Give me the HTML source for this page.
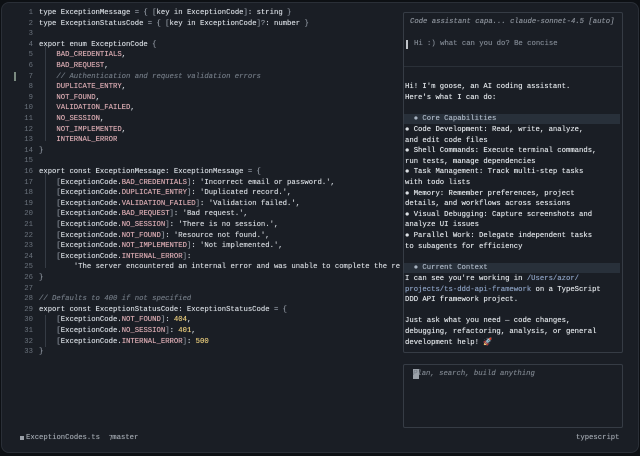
<!DOCTYPE html>
<html><head><meta charset="utf-8"><style>
*{margin:0;padding:0;box-sizing:border-box}
body{width:640px;height:456px;background:#0d1014;overflow:hidden;font-family:"Liberation Mono",monospace;font-size:7.25px;color:#d0d5db}
.win{position:absolute;left:1px;top:2px;width:638px;height:451px;background:#1a1e25;border-radius:8px;border:1px solid #2a2f37}
.l{position:absolute;white-space:pre;line-height:10.6px;height:10.6px;text-shadow:0 0 0.4px currentColor}
.n{position:absolute;width:33px;text-align:right;color:#6b737d;white-space:pre;line-height:10.6px}
.k{color:#d0d5db}.m{color:#d3a6ad}.c{color:#6f7781;font-style:italic}.s{color:#cfd3d8}.num{color:#e3c77a}.p{color:#8c939d}
.g{position:absolute;left:45px;width:1px;background:#353b44}
.box{position:absolute;border:1px solid #363c45;border-radius:2px}
.r{position:absolute;left:405px;white-space:pre;line-height:10.6px;color:#dde1e5;text-shadow:0 0 0.4px currentColor}
.hl{position:absolute;left:404px;width:216px;height:10px;background:#28303a}
.u{color:#8a9fc0}
</style></head><body>
<div class="win"></div>
<div class="g" style="top:46px;height:95px"></div>
<div class="g" style="top:173px;height:95px"></div>
<div class="g" style="top:315px;height:32px"></div>
<div style="position:absolute;left:14px;top:72px;width:2px;height:9px;background:#7a8a80"></div>
<div id="code"></div>
<script>
var L=[
'<span class="k">type ExceptionMessage</span> <span class="p">= { [</span>key in ExceptionCode<span class="p">]</span>: string <span class="p">}</span>',
'<span class="k">type ExceptionStatusCode</span> <span class="p">= { [</span>key in ExceptionCode<span class="p">]?</span>: number <span class="p">}</span>',
'',
'export enum ExceptionCode <span class="p">{</span>',
'    <span class="m">BAD_CREDENTIALS</span>,',
'    <span class="m">BAD_REQUEST</span>,',
'    <span class="c">// Authentication and request validation errors</span>',
'    <span class="m">DUPLICATE_ENTRY</span>,',
'    <span class="m">NOT_FOUND</span>,',
'    <span class="m">VALIDATION_FAILED</span>,',
'    <span class="m">NO_SESSION</span>,',
'    <span class="m">NOT_IMPLEMENTED</span>,',
'    <span class="m">INTERNAL_ERROR</span>',
'<span class="p">}</span>',
'',
'export const ExceptionMessage: ExceptionMessage <span class="p">= {</span>',
'    <span class="p">[</span>ExceptionCode.<span class="m">BAD_CREDENTIALS</span><span class="p">]</span>: <span class="s">\'Incorrect email or password.\'</span>,',
'    <span class="p">[</span>ExceptionCode.<span class="m">DUPLICATE_ENTRY</span><span class="p">]</span>: <span class="s">\'Duplicated record.\'</span>,',
'    <span class="p">[</span>ExceptionCode.<span class="m">VALIDATION_FAILED</span><span class="p">]</span>: <span class="s">\'Validation failed.\'</span>,',
'    <span class="p">[</span>ExceptionCode.<span class="m">BAD_REQUEST</span><span class="p">]</span>: <span class="s">\'Bad request.\'</span>,',
'    <span class="p">[</span>ExceptionCode.<span class="m">NO_SESSION</span><span class="p">]</span>: <span class="s">\'There is no session.\'</span>,',
'    <span class="p">[</span>ExceptionCode.<span class="m">NOT_FOUND</span><span class="p">]</span>: <span class="s">\'Resource not found.\'</span>,',
'    <span class="p">[</span>ExceptionCode.<span class="m">NOT_IMPLEMENTED</span><span class="p">]</span>: <span class="s">\'Not implemented.\'</span>,',
'    <span class="p">[</span>ExceptionCode.<span class="m">INTERNAL_ERROR</span><span class="p">]</span>:',
'        <span class="s">\'The server encountered an internal error and was unable to complete the re</span>',
'<span class="p">}</span>',
'',
'<span class="c">// Defaults to 400 if not specified</span>',
'export const ExceptionStatusCode: ExceptionStatusCode <span class="p">= {</span>',
'    <span class="p">[</span>ExceptionCode.<span class="m">NOT_FOUND</span><span class="p">]</span>: <span class="num">404</span>,',
'    <span class="p">[</span>ExceptionCode.<span class="m">NO_SESSION</span><span class="p">]</span>: <span class="num">401</span>,',
'    <span class="p">[</span>ExceptionCode.<span class="m">INTERNAL_ERROR</span><span class="p">]</span>: <span class="num">500</span>',
'<span class="p">}</span>'];
var h='';
for(var i=0;i<L.length;i++){var t=(8+i*10.6).toFixed(1);
h+='<div class="n" style="left:0;top:'+t+'px">'+(i+1)+'</div><div class="l" style="left:39px;top:'+t+'px;max-width:362px;overflow:hidden">'+L[i]+'</div>';}
document.getElementById('code').innerHTML=h;
</script>
<div class="box" style="left:403px;top:12px;width:220px;height:341px"></div>
<div class="r c" style="left:410px;top:17px;color:#8a9099">Code assistant capa... claude-sonnet-4.5 [auto]</div>
<div style="position:absolute;left:406px;top:40px;width:2px;height:9px;background:#c0c4ca"></div>
<div class="r" style="left:414px;top:39px;color:#7e858f">Hi :) what can you do? Be concise</div>
<div style="position:absolute;left:404px;top:66px;width:218px;height:1px;background:#2a3038"></div>
<div class="r" style="top:82px">Hi! I'm goose, an AI coding assistant.
Here's what I can do:</div>
<div class="hl" style="top:114px"></div>
<div class="r" style="top:114px;color:#a9b4c2">  ● Core Capabilities</div>
<div class="r" style="top:125px">● Code Development: Read, write, analyze,
and edit code files
● Shell Commands: Execute terminal commands,
run tests, manage dependencies
● Task Management: Track multi-step tasks
with todo lists
● Memory: Remember preferences, project
details, and workflows across sessions
● Visual Debugging: Capture screenshots and
analyze UI issues
● Parallel Work: Delegate independent tasks
to subagents for efficiency</div>
<div class="hl" style="top:263px"></div>
<div class="r" style="top:263px;color:#a9b4c2">  ● Current Context</div>
<div class="r" style="top:274px">I can see you're working in <span class="u">/Users/azor/</span>
<span class="u">projects/ts-ddd-api-framework</span> on a TypeScript
DDD API framework project.

Just ask what you need — code changes,
debugging, refactoring, analysis, or general
development help! 🚀</div>
<div class="box" style="left:403px;top:364px;width:220px;height:64px"></div>
<div style="position:absolute;left:413px;top:369px;width:6px;height:10px;background:#9aa0a8"></div>
<div class="r c" style="left:413px;top:369px;color:#7a818a">Plan, search, build anything</div>
<div class="r" style="left:576px;top:433px;color:#9aa0a8">typescript</div>
<div style="position:absolute;left:20px;top:436px;width:4px;height:4px;background:#9aa0a8"></div>
<div class="r" style="left:26px;top:433px;color:#9aa0a8">ExceptionCodes.ts  ⁊master</div>
</body></html>
